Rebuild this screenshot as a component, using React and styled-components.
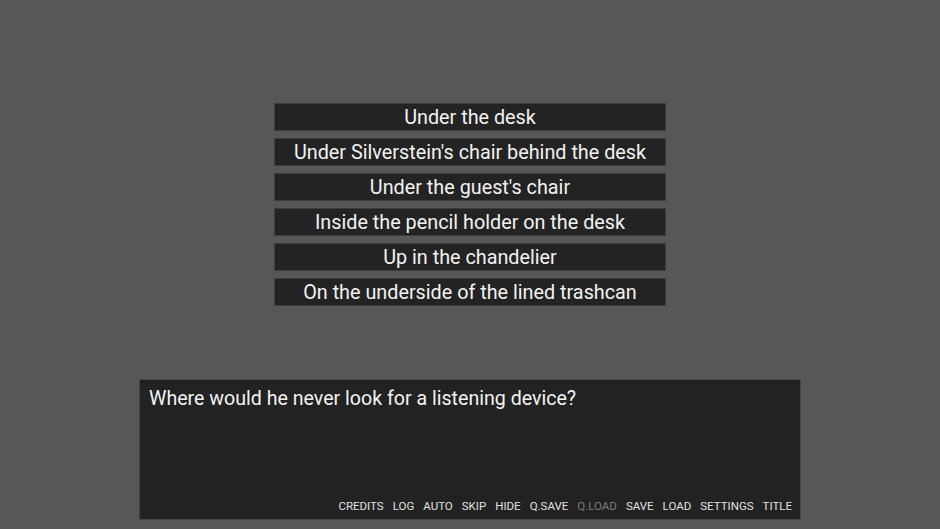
import React from "react";
import styled, { createGlobalStyle } from "styled-components";

const Global = createGlobalStyle`
  html, body { margin: 0; padding: 0; }
  body { background: #575757; font-family: Roboto, "Noto Sans", sans-serif; }
`;

const Screen = styled.div`
  width: 940px;
  height: 529px;
  display: flex;
  flex-direction: column;
  align-items: center;
  box-sizing: border-box;
  padding-top: 103px;
`;

const Choices = styled.div`
  width: 392px;
  display: flex;
  flex-direction: column;
  gap: 7px;
`;

const Choice = styled.div`
  height: 28px;
  box-sizing: border-box;
  background: #232323;
  border: 1px solid #3c3c3c;
  color: #f2f2f2;
  font-size: 19.8px;
  line-height: 27px;
  text-align: center;
`;

const Dialog = styled.div`
  margin-top: 73px;
  width: 662px;
  height: 141px;
  box-sizing: border-box;
  background: #222222;
  border: 1px solid #444;
  display: flex;
  flex-direction: column;
  justify-content: space-between;
  padding: 6px 8px 6px 9px;
`;

const Say = styled.div`
  color: #f2f2f2;
  font-size: 19.6px;
  line-height: 26px;
`;

const Menu = styled.div`
  display: flex;
  justify-content: flex-end;
  gap: 9px;
`;

const MenuItem = styled.span`
  font-size: 11.5px;
  color: ${(p) => (p.$disabled ? "#7a7a7a" : "#e0e0e0")};
`;

const choices = [
  "Under the desk",
  "Under Silverstein's chair behind the desk",
  "Under the guest's chair",
  "Inside the pencil holder on the desk",
  "Up in the chandelier",
  "On the underside of the lined trashcan",
];

const menu = ["CREDITS", "LOG", "AUTO", "SKIP", "HIDE", "Q.SAVE", "Q.LOAD", "SAVE", "LOAD", "SETTINGS", "TITLE"];

export default function App() {
  return (
    <>
      <Global />
      <Screen>
        <Choices>
          {choices.map((c) => (
            <Choice key={c}>{c}</Choice>
          ))}
        </Choices>
        <Dialog>
          <Say>Where would he never look for a listening device?</Say>
          <Menu>
            {menu.map((m) => (
              <MenuItem key={m} $disabled={m === "Q.LOAD"}>{m}</MenuItem>
            ))}
          </Menu>
        </Dialog>
      </Screen>
    </>
  );
}
